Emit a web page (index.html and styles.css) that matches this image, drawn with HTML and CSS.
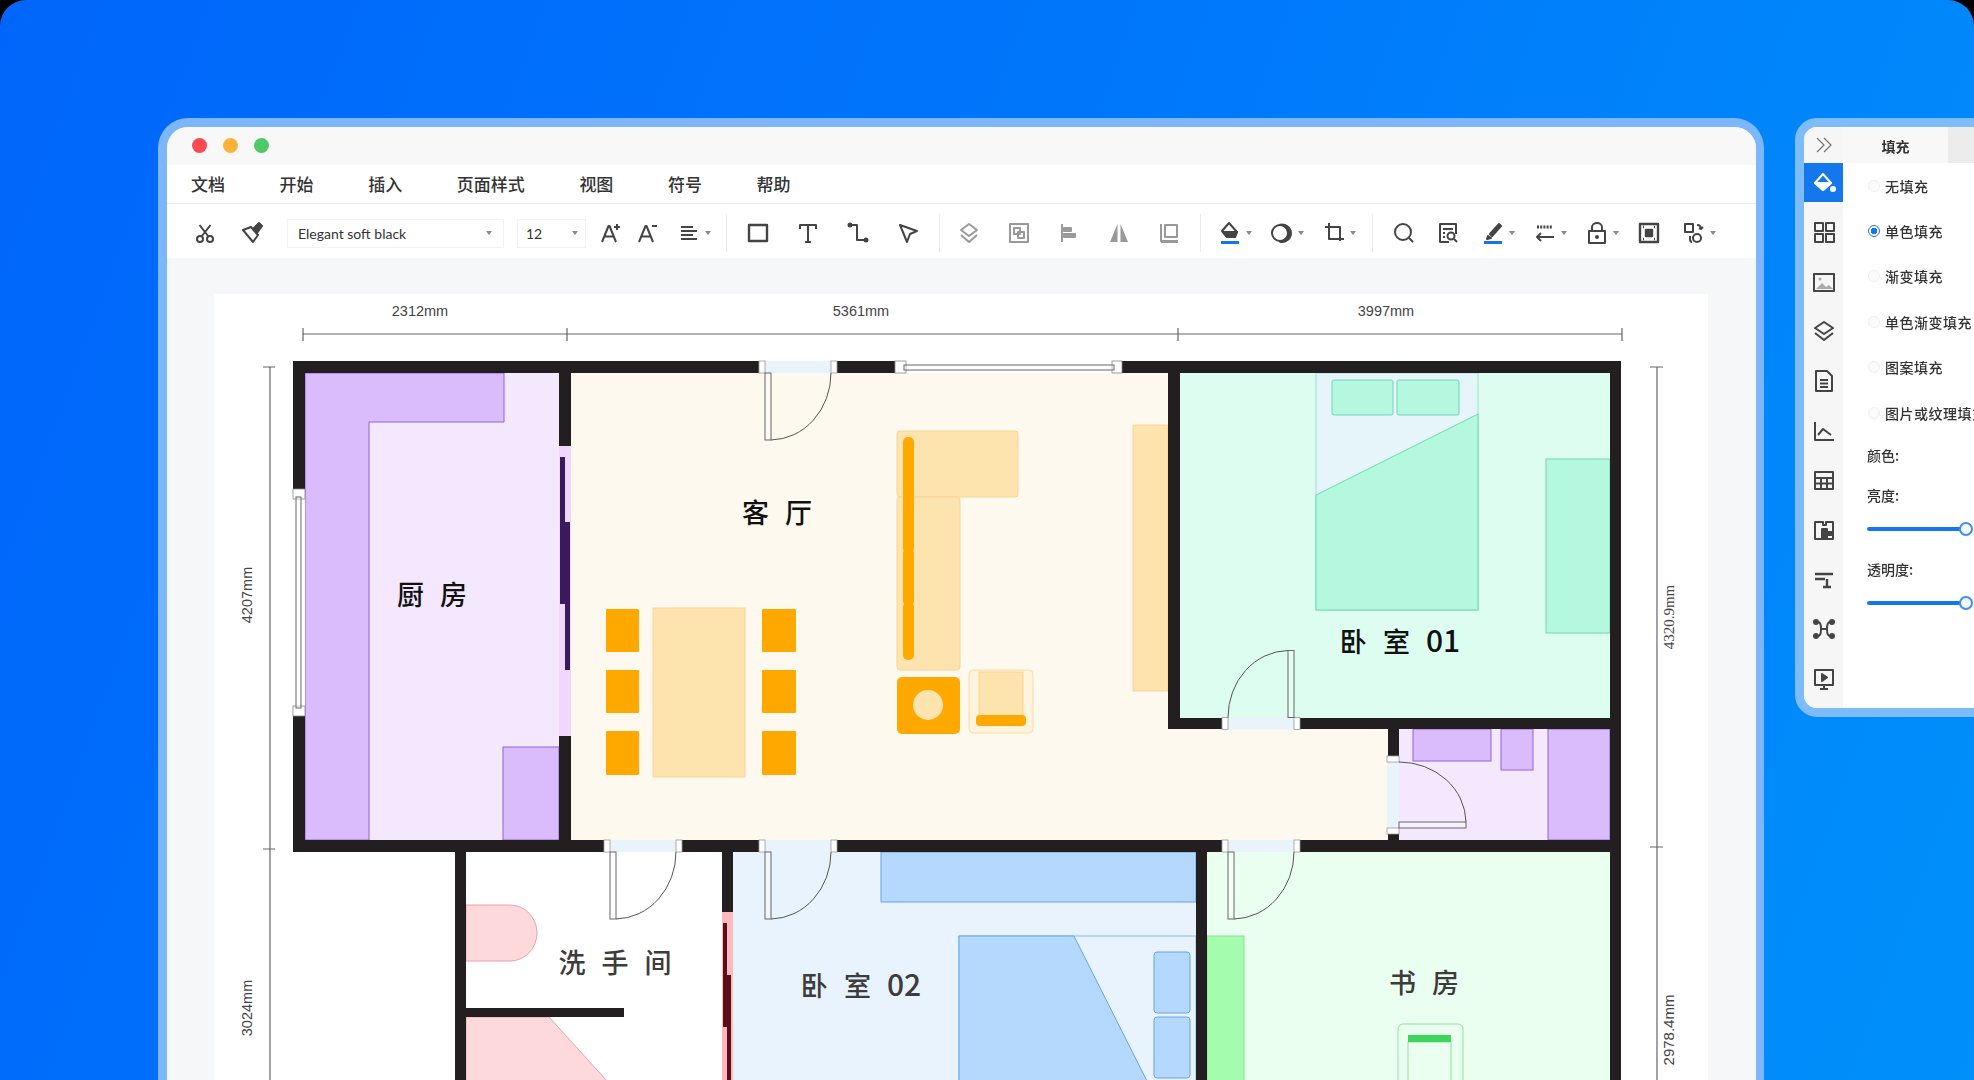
FILE: index.html
```html
<!DOCTYPE html>
<html lang="zh">
<head>
<meta charset="utf-8">
<title>户型图</title>
<link rel="stylesheet" href="styles.css">
</head>
<body>
<div class="stage">
  <div class="window">
    <div class="titlebar"><span class="dot red"></span><span class="dot amber"></span><span class="dot green"></span></div>
    <nav class="menubar"><span>文档</span><span>开始</span><span>插入</span><span>页面样式</span><span>视图</span><span>符号</span><span>帮助</span></nav>
    <div class="toolbar">
      <span class="tool w47"><svg class="ic" viewBox="0 0 24 24"><circle cx="7" cy="18" r="3"/><circle cx="17" cy="18" r="3"/><path d="M8.500 15.500 17.500 4M15.500 15.500 6.500 4"/></svg></span>
      <span class="tool w47"><svg class="ic" viewBox="0 0 24 24"><path d="M3 9 11 6 18 14 13 21Z"/><path d="M13 8 19 2 22 5 17 12Z" class="solid"/></svg></span>
      <span class="select font-select"><span>Elegant soft black</span><i class="caret"></i></span>
      <span class="select size-select"><span>12</span><i class="caret"></i></span>
      <span class="tool w37 first-a"><svg class="ic" viewBox="0 0 24 24"><path d="m4 21 6.500-16h1L18 21M6.500 15.500h9M19 3v6M16 6h6"/></svg></span>
      <span class="tool w37"><svg class="ic" viewBox="0 0 24 24"><path d="m4 21 6.500-16h1L18 21M6.500 15.500h9M17 5h5"/></svg></span>
      <span class="tool-c"><svg class="ic" viewBox="0 0 24 24"><path d="M4 6h12M4 10h16M4 14h12M4 18h16"/></svg><i class="caret"></i></span>
      <span class="sep sep1"></span>
      <span class="tool w50"><svg class="ic thick" viewBox="0 0 24 24"><rect x="3" y="4" width="18" height="16"/></svg></span>
      <span class="tool w50"><svg class="ic" viewBox="0 0 24 24"><path d="M4 8V4h16v4M12 4v17M9 21h6"/></svg></span>
      <span class="tool w50"><svg class="ic" viewBox="0 0 24 24"><circle cx="4" cy="4" r="1.500" class="solid"/><circle cx="20" cy="19" r="1.500" class="solid"/><path d="M5 4h6v15h8"/></svg></span>
      <span class="tool w50"><svg class="ic" viewBox="0 0 24 24"><path d="m4 4 17 6-7 3-3 8L4 4Z"/></svg></span>
      <span class="sep sep2"></span>
      <span class="tool w50 muted"><svg class="ic" viewBox="0 0 24 24"><path d="m12 3 8 6-8 6-8-6 8-6Z"/><path d="m4 14 8 7 8-7"/></svg></span>
      <span class="tool w50 muted"><svg class="ic" viewBox="0 0 24 24"><rect x="3" y="3" width="18" height="18"/><rect x="7" y="7" width="6" height="6"/><rect x="11" y="11" width="6" height="6"/></svg></span>
      <span class="tool w50 muted"><svg class="ic" viewBox="0 0 24 24"><path d="M5 3v18"/><path d="M7 7h7v3H7ZM7 13h11v3H7Z" class="solid"/></svg></span>
      <span class="tool w50 muted"><svg class="ic" viewBox="0 0 24 24"><path d="M10.500 3v18H3ZM13.500 3v18H21Z" class="flat"/></svg></span>
      <span class="tool w50 muted"><svg class="ic" viewBox="0 0 24 24"><path d="M4 3v17h17M4 21h17"/><rect x="8" y="4" width="12" height="12"/></svg></span>
      <span class="sep sep3"></span>
      <span class="tool-c"><svg class="ic" viewBox="0 0 24 24"><path d="M11 2 4 10l5 6h8l2-5-8-9Z"/><path d="M5 11h14l-2 5H9Z" class="solid"/><rect x="3" y="20" width="18" height="3" class="blue"/></svg><i class="caret"></i></span>
      <span class="tool-c"><svg class="ic" viewBox="0 0 24 24"><path d="M21 12a9 9 0 0 1-11 8.800 8 8 0 1 0 0-17 9 9 0 0 1 11 8.200Z" class="solid"/><circle cx="10" cy="12" r="8"/></svg><i class="caret"></i></span>
      <span class="tool-c"><svg class="ic" viewBox="0 0 24 24"><path d="M3 6h15v14M7 2v16h15"/></svg><i class="caret"></i></span>
      <span class="sep sep4"></span>
      <span class="tool w44"><svg class="ic" viewBox="0 0 24 24"><circle cx="11" cy="11" r="8"/><path d="m17 17 4 4"/></svg></span>
      <span class="tool w44"><svg class="ic" viewBox="0 0 24 24"><path d="M13 21H4V3h16v10M7 8h10M7 12h2M7 16h2"/><circle cx="15" cy="15" r="3.500"/><path d="m18 18 3 3"/></svg></span>
      <span class="tool-c"><svg class="ic" viewBox="0 0 24 24"><path d="m9 13 9-10 2 2-9 10Z" class="solid"/><path d="M7 15l3 2-4 1Z" class="solid"/><rect x="3" y="20" width="18" height="3" class="blue"/></svg><i class="caret"></i></span>
      <span class="tool-c"><svg class="ic" viewBox="0 0 24 24"><path d="M4 6h16" class="dash"/><path d="M21 16H4m4-4-4 4 4 4"/></svg><i class="caret"></i></span>
      <span class="tool-c"><svg class="ic" viewBox="0 0 24 24"><rect x="4" y="10" width="16" height="12"/><path d="M7 10V6a5 4 0 0 1 10 0v4"/><circle cx="12" cy="16" r="1" class="solid"/></svg><i class="caret"></i></span>
      <span class="tool-c w45"><svg class="ic thick" viewBox="0 0 24 24"><rect x="3" y="3" width="18" height="18"/><rect x="9" y="9" width="6" height="6" class="solid"/><path d="M6 6h1M17 6h1M6 18h1M17 18h1"/></svg></span>
      <span class="tool-c"><svg class="ic" viewBox="0 0 24 24"><rect x="3" y="3" width="8" height="8"/><circle cx="15" cy="17" r="4"/><path d="M15 4c3 0 4 1 4 4m-2-1 2 1 2-2M8 15v3c0 2 1 3 2 3"/></svg><i class="caret"></i></span>
    </div>
    <main class="canvas">
      <section class="sheet">
        <svg class="plan" viewBox="214 294 1494 786" role="img" aria-label="户型图">
          <defs>
            <g id="door">
              <rect class="gap" x="0" y="0" width="78" height="12"/>
              <rect class="jamb" x="0" y="0" width="6" height="12"/>
              <rect class="jamb" x="72" y="0" width="6" height="12"/>
              <rect class="leaf" x="6" y="12" width="6" height="67"/>
              <path class="swing" d="M12 79A61 67 0 0 0 72 12"/>
            </g>
          </defs>

          <rect class="kitchen" x="305" y="373" width="254" height="467"/>
          <path class="living" d="M571 373H1168V729H1388V840H571Z"/>
          <rect class="mint" x="1180" y="373" width="430" height="345"/>
          <rect class="kitchen" x="1399" y="729" width="211" height="111"/>
          <rect class="bedroom2" x="733" y="852" width="463" height="228"/>
          <rect class="study" x="1207" y="852" width="403" height="228"/>

          <path class="counter" d="M305 373H504V422H369V840H305Z"/>
          <rect class="counter" x="503" y="747" width="56" height="93"/>
          <rect class="counter" x="1413" y="729" width="78" height="32"/>
          <rect class="counter" x="1501" y="729" width="32" height="41"/>
          <rect class="counter" x="1548" y="729" width="62" height="111"/>

          <rect class="soft" x="653" y="608" width="92" height="169"/>
          <rect class="orange" x="606" y="609" width="33" height="43" rx="1"/>
          <rect class="orange" x="606" y="670" width="33" height="43" rx="1"/>
          <rect class="orange" x="606" y="731" width="33" height="44" rx="1"/>
          <rect class="orange" x="762" y="609" width="34" height="43" rx="1"/>
          <rect class="orange" x="762" y="670" width="34" height="43" rx="1"/>
          <rect class="orange" x="762" y="731" width="34" height="44" rx="1"/>
          <rect class="soft" x="897" y="431" width="121" height="66" rx="3"/>
          <rect class="soft" x="897" y="497" width="63" height="173" rx="3"/>
          <rect class="orange" x="903" y="437" width="11" height="62" rx="5"/>
          <rect class="orange" x="903" y="492" width="11" height="61" rx="5"/>
          <rect class="orange" x="903" y="548" width="11" height="58" rx="5"/>
          <rect class="orange" x="903" y="602" width="11" height="58" rx="5"/>
          <rect class="orange" x="897" y="677" width="63" height="57" rx="5"/>
          <circle class="soft plain" cx="928" cy="705" r="15"/>
          <rect class="pale" x="969" y="670" width="64" height="63" rx="4"/>
          <rect class="soft" x="979" y="672" width="44" height="50"/>
          <rect class="orange" x="976" y="715" width="50" height="11" rx="4"/>
          <rect class="soft" x="1133" y="425" width="35" height="266"/>

          <rect class="sheetblue" x="1316" y="373" width="162" height="237"/>
          <path class="minty" d="M1316 495 1478 414V610H1316Z"/>
          <rect class="minty" x="1332" y="380" width="61" height="35" rx="2"/>
          <rect class="minty" x="1397" y="380" width="62" height="35" rx="2"/>
          <rect class="minty" x="1546" y="459" width="64" height="174"/>

          <path class="pink" d="M466 905H510A27 28 0 0 1 510 961H466Z"/>
          <path class="pink" d="M466 1017H549L607 1081H466Z"/>

          <rect class="sky" x="881" y="852" width="315" height="50"/>
          <rect class="bedframe" x="959" y="936" width="237" height="150"/>
          <path class="sky" d="M959 936H1074L1147 1081H959Z"/>
          <rect class="sky" x="1154" y="952" width="36" height="61" rx="3"/>
          <rect class="sky" x="1154" y="1017" width="36" height="61" rx="3"/>

          <rect class="shelf" x="1207" y="936" width="37" height="150"/>
          <rect class="desk" x="1398" y="1024" width="65" height="70" rx="5"/>
          <rect class="desk" x="1408" y="1042" width="43" height="50"/>
          <rect class="deskbar" x="1408" y="1035" width="43" height="7"/>

          <rect class="wall" x="293" y="361" width="1328" height="12"/>
          <rect class="wall" x="293" y="361" width="12" height="491"/>
          <rect class="wall" x="293" y="840" width="1328" height="12"/>
          <rect class="wall" x="1610" y="361" width="11" height="719"/>
          <rect class="wall" x="559" y="373" width="12" height="467"/>
          <rect class="wall" x="1168" y="373" width="12" height="356"/>
          <rect class="wall" x="1168" y="718" width="442" height="11"/>
          <rect class="wall" x="1388" y="729" width="11" height="111"/>
          <rect class="wall" x="455" y="852" width="11" height="228"/>
          <rect class="wall" x="722" y="852" width="11" height="228"/>
          <rect class="wall" x="1196" y="852" width="11" height="228"/>
          <rect class="wall" x="466" y="1008" width="158" height="9"/>

          <use href="#door" x="759" y="361"/>
          <use href="#door" x="604" y="840"/>
          <use href="#door" x="759" y="840"/>
          <use href="#door" x="1222" y="840"/>
          <use href="#door" transform="translate(1300 729.500) rotate(180)"/>
          <use href="#door" transform="translate(1387 834) rotate(-90)"/>

          <rect class="glass" x="895" y="361" width="227" height="12"/>
          <rect class="wjamb" x="895" y="361" width="11" height="12"/>
          <rect class="wjamb" x="1112" y="361" width="10" height="12"/>
          <rect class="leaf" x="904" y="365" width="210" height="5"/>
          <rect class="glass" x="293" y="489" width="12" height="227"/>
          <rect class="wjamb" x="293" y="489" width="12" height="10"/>
          <rect class="wjamb" x="293" y="706" width="12" height="10"/>
          <rect class="leaf" x="296" y="497" width="5" height="211"/>

          <rect class="lilacpane" x="559" y="446" width="12" height="290"/>
          <rect class="darklilac" x="560" y="457" width="5" height="147"/>
          <rect class="darklilac" x="565" y="522" width="5" height="148"/>
          <rect class="rosepane" x="722" y="912" width="11" height="168"/>
          <rect class="darkrose" x="723" y="923" width="4" height="104"/>
          <rect class="darkrose" x="727" y="975" width="4" height="105"/>

          <path class="dim" d="M303 334H1622M303 328V341M567 328V341M1178 328V341M1622 328V341"/>
          <path class="dim" d="M270 367V1080M263 367H275M263 849H275"/>
          <path class="dim" d="M1657 367V1080M1650 367H1663M1650 847H1663"/>

          <text class="dimtext mid" x="420" y="316">2312mm</text>
          <text class="dimtext mid" x="861" y="316">5361mm</text>
          <text class="dimtext mid" x="1386" y="316">3997mm</text>
          <text class="dimtext mid" transform="translate(252 595) rotate(-90)">4207mm</text>
          <text class="dimtext mid" transform="translate(252 1008) rotate(-90)">3024mm</text>
          <text class="dimtext serif mid" transform="translate(1674 617) rotate(-90)">4320.9mm</text>
          <text class="dimtext wide mid" transform="translate(1674 1030) rotate(-90)">2978.4mm</text>

          <text class="room mid" x="432" y="605">厨 房</text>
          <text class="room mid" x="777" y="523">客 厅</text>
          <text class="room mid" x="1400" y="652">卧 室 <tspan class="num">01</tspan></text>
          <text class="room grey mid" x="615" y="973">洗 手 间</text>
          <text class="room grey mid" x="861" y="996">卧 室 <tspan class="num">02</tspan></text>
          <text class="room grey mid" x="1424" y="993">书 房</text>
        </svg>
      </section>
    </main>
  </div>

  <aside class="panel">
    <div class="rail">
      <div class="rail-top"><svg class="ic thin" viewBox="0 0 24 24"><path d="m5 5 7 7-7 7M12 5l7 7-7 7"/></svg></div>
      <div class="rail-active"><svg class="ic white" viewBox="0 0 24 24"><path d="M11 3 3 12l8 7 8-7-8-9Z"/><path d="M3 12h16l-8 7Z" class="solid"/><circle cx="21" cy="18" r="2" class="solid"/></svg></div>
      <div class="rail-item"><svg class="ic" viewBox="0 0 24 24"><rect x="3" y="3" width="8" height="8"/><rect x="14" y="3" width="8" height="8"/><rect x="3" y="14" width="8" height="8"/><rect x="14" y="14" width="8" height="8"/></svg></div>
      <div class="rail-item"><svg class="ic" viewBox="0 0 24 24"><rect x="2" y="4" width="20" height="17"/><path d="m4 19 6-6 4 4 3-2 4 4Z" class="grey-fill"/><circle cx="8" cy="9" r="1.500" class="grey-fill"/></svg></div>
      <div class="rail-item"><svg class="ic" viewBox="0 0 24 24"><path d="m12 3 9 6-9 6-9-6 9-6Z"/><path d="m3 14 9 7 9-7"/></svg></div>
      <div class="rail-item"><svg class="ic" viewBox="0 0 24 24"><path d="M4 2h11l5 5v15H4ZM8 11h8M8 14.500h8M8 18h8"/></svg></div>
      <div class="rail-item"><svg class="ic" viewBox="0 0 24 24"><path d="M3 3v18h19M6 16l5-6 4 3 4 3"/></svg></div>
      <div class="rail-item"><svg class="ic" viewBox="0 0 24 24"><rect x="3" y="4" width="18" height="17"/><path d="M3 10h18M3 15.500h18M9 10v11M15 10v11"/></svg></div>
      <div class="rail-item"><svg class="ic" viewBox="0 0 24 24"><path d="M3 4h8v3h3V4h7v17H3Z"/><path d="M10 11h5v3h5v3h-5v4h-5Z" class="solid"/></svg></div>
      <div class="rail-item"><svg class="ic thick" viewBox="0 0 24 24"><path d="M3 6h18M3 11h10M15 11v8M11 19h8"/></svg></div>
      <div class="rail-item"><svg class="ic" viewBox="0 0 24 24"><circle cx="4" cy="5" r="2" class="solid"/><circle cx="20" cy="5" r="2" class="solid"/><circle cx="4" cy="19" r="2" class="solid"/><circle cx="20" cy="19" r="2" class="solid"/><path d="M6 5c4 0 4 14 0 14M18 5c-4 0-4 14 0 14M9 12h6"/></svg></div>
      <div class="rail-item"><svg class="ic" viewBox="0 0 24 24"><rect x="3" y="3" width="18" height="15"/><path d="M10 7v7l5-3.500Z" class="solid"/><path d="M12 18v4M8 22h8"/></svg></div>
    </div>
    <div class="props">
      <div class="tabs"><span class="tab">填充</span></div>
      <label class="option"><i class="radio"></i>无填充</label>
      <label class="option"><i class="radio on"></i>单色填充</label>
      <label class="option"><i class="radio"></i>渐变填充</label>
      <label class="option"><i class="radio"></i>单色渐变填充</label>
      <label class="option"><i class="radio"></i>图案填充</label>
      <label class="option"><i class="radio"></i>图片或纹理填充</label>
      <div class="field">颜色:</div>
      <div class="field">亮度:</div>
      <div class="slider"><i class="thumb"></i></div>
      <div class="field">透明度:</div>
      <div class="slider"><i class="thumb"></i></div>
    </div>
  </aside>
</div>
</body>
</html>
```

FILE: styles.css
```css
* { box-sizing: border-box; }
html, body { margin: 0; background: #000; }
body { width: 1974px; height: 1080px; overflow: hidden; }

.stage {
  position: relative;
  width: 1974px;
  height: 1080px;
  overflow: hidden;
  border-radius: 26px 26px 0 0;
  background: linear-gradient(110deg, #0066fb 0%, #0078fb 50%, #0090fa 100%);
  font-family: "Noto Sans CJK SC", "Noto Sans", sans-serif;
  color: #333;
  filter: blur(0.4px);
}

.window {
  position: absolute;
  left: 158px;
  top: 118px;
  width: 1606px;
  height: 1000px;
  display: flex;
  flex-direction: column;
  border: solid #7db6fb;
  border-width: 9px 8px 0 9px;
  border-radius: 30px 30px 0 0;
  overflow: hidden;
  background: #f6f7f9;
}

.titlebar {
  height: 38px;
  display: flex;
  align-items: center;
  gap: 16px;
  padding: 0 0 2px 25px;
  background: #f8f8f8;
}
.dot { width: 15px; height: 15px; border-radius: 50%; }
.red { background: #fb4a52; }
.amber { background: #fdb23c; }
.green { background: #4fc968; }

.menubar {
  height: 39px;
  display: flex;
  align-items: center;
  gap: 54.600px;
  padding: 0 0 1px 24px;
  background: #fff;
  border-bottom: 1px solid #ebebeb;
  font-size: 17px;
  font-weight: 500;
  line-height: 1;
}

.toolbar {
  height: 54px;
  display: flex;
  align-items: center;
  padding: 4px 0 0 14px;
  background: #fff;
  color: #444;
}
.tool { display: flex; justify-content: center; align-items: center; flex: none; }
.w47 { width: 47px; }
.w50 { width: 50px; }
.w44 { width: 44px; }
.w37 { width: 37.500px; }
.first-a { margin-left: 6px; }
.muted { color: #999; }
.tool-c { display: flex; align-items: center; gap: 4px; flex: none; width: 52px; padding-left: 11px; }
.tool-c.w45 { width: 45px; }
.caret {
  width: 0;
  height: 0;
  flex: none;
  border: 3px solid transparent;
  border-top: 4px solid #888;
  border-bottom: 0;
}
.select {
  height: 27px;
  flex: none;
  display: flex;
  align-items: center;
  justify-content: space-between;
  background: #fff;
  box-shadow: 0 0 0 1px #f2f2f2;
  font-family: Lato, "Liberation Sans", Arial, sans-serif;
  font-size: 14px;
  color: #333;
}
.font-select { width: 215px; margin-left: 13px; padding: 0 11px 0 10px; }
.size-select { width: 67px; margin-left: 15px; padding: 0 7px 0 8px; }
.sep { width: 1px; height: 38px; flex: none; background: #ececec; }
.sep1 { margin: 0 6px 0 8px; }
.sep2 { margin: 0 4px 0 6px; }
.sep3 { margin: 0 6px; }
.sep4 { margin: 0 9px; }

.ic {
  width: 24px;
  height: 24px;
  flex: none;
  fill: none;
  stroke: currentColor;
  stroke-width: 2;
  stroke-linejoin: round;
}
.ic.thick { stroke-width: 2.400; }
.ic.thin { stroke-width: 1.200; }
.ic.white { color: #fff; }
.ic .solid { fill: currentColor; }
.ic .flat { fill: currentColor; stroke: none; }
.ic .grey-fill { fill: #aaa; stroke: none; }
.ic .blue { fill: #1675e8; stroke: none; }
.ic .dash { stroke-dasharray: 2 1.200; stroke-width: 3; }

.canvas { flex: 1; min-height: 0; padding: 36px 48px 0 47px; }
.sheet { height: 100%; background: #fff; }
.plan { display: block; width: 1494px; height: 786px; }

.kitchen { fill: #f3e8fe; }
.living { fill: #fef9ee; }
.mint { fill: #dcfdf0; }
.bedroom2 { fill: #e8f3fe; }
.study { fill: #eafff0; }
.counter { fill: #dabcfd; stroke: #8f63d8; stroke-width: 1; }
.soft { fill: #fde3ae; stroke: #f7d596; stroke-width: 1; }
.soft.plain { stroke: none; }
.pale { fill: #fef3dc; stroke: #f9dca4; stroke-width: 1; }
.orange { fill: #ffa800; }
.sheetblue { fill: #e6f5fa; stroke: #9adfd0; stroke-width: 1; }
.minty { fill: #b4f8e0; stroke: #71d6b8; stroke-width: 1; }
.pink { fill: #fdd9db; stroke: #e8a2a8; stroke-width: 1; }
.sky { fill: #b5d8fd; stroke: #66a5ea; stroke-width: 1; }
.bedframe { fill: #e8f3fe; stroke: #8ab9ea; stroke-width: 1; }
.shelf { fill: #a4fdac; stroke: #8be295; stroke-width: 1; }
.desk { fill: none; stroke: #92e09e; stroke-width: 1; }
.deskbar { fill: #3dd65a; }
.wall { fill: #231f20; }
.gap { fill: #e9f3fc; }
.jamb { fill: #fff; stroke: #999; stroke-width: .8; }
.wjamb { fill: #fff; stroke: #888; stroke-width: .8; }
.leaf { fill: #fff; fill-opacity: .35; stroke: #666; stroke-width: 1; }
.swing { fill: none; stroke: #555; stroke-width: 1; }
.glass { fill: #fff; }
.lilacpane { fill: #f1d6fd; }
.darklilac { fill: #3a1a5c; }
.rosepane { fill: #fdb9bd; }
.darkrose { fill: #5a0f18; }
.dim { fill: none; stroke: #666; stroke-width: 1.200; }

.dimtext {
  font-family: "Liberation Sans", Arial, sans-serif;
  font-size: 14.500px;
  fill: #444;
}
.dimtext.serif { font-family: "Liberation Serif", "Times New Roman", serif; font-size: 15px; }
.dimtext.wide { font-size: 15px; }
.mid { text-anchor: middle; }
.room {
  font-family: "Noto Sans CJK SC", sans-serif;
  font-size: 27px;
  font-weight: 500;
  word-spacing: 10px;
  fill: #111;
}
.room.grey { fill: #3c3c3c; }
.room .num { font-size: 30px; }

.panel {
  position: absolute;
  left: 1795px;
  top: 118px;
  width: 260px;
  height: 599px;
  display: flex;
  border: 9px solid #7dbcf9;
  border-radius: 22px;
  overflow: hidden;
  background: #fff;
}
.rail { width: 39px; flex: none; background: #f6f6f6; color: #444; }
.rail-top { height: 36px; display: flex; align-items: center; justify-content: center; color: #777; }
.rail-active { height: 39px; margin-bottom: 5px; display: flex; align-items: center; justify-content: center; background: #1478ec; }
.rail-item { height: 49.700px; display: flex; align-items: center; justify-content: center; }

.props { flex: 1; font-size: 14px; font-weight: 500; color: #333; }
.tabs { height: 36px; background: #ececec; }
.tab {
  display: flex;
  align-items: center;
  justify-content: center;
  width: 105px;
  height: 36px;
  padding-top: 2px;
  background: #f8f8f8;
  font-weight: 700;
}
.option {
  height: 45.400px;
  display: flex;
  align-items: center;
  gap: 5px;
  padding-left: 25px;
  letter-spacing: .5px;
}
.radio { width: 12px; height: 12px; border-radius: 50%; border: 1px solid #eee; background: #fbfbfb; flex: none; }
.radio.on { border: 1px solid #1478ec; background: radial-gradient(circle, #1478ec 0 3px, #fff 3.500px); }
.field { height: 40px; display: flex; align-items: center; padding-left: 24px; }
.slider {
  position: relative;
  height: 4px;
  width: 100px;
  margin: 12px 0 18px 24px;
  border-radius: 2px;
  background: #1478ec;
}
.thumb {
  position: absolute;
  right: -6px;
  top: -5px;
  width: 14px;
  height: 14px;
  border-radius: 50%;
  border: 2px solid #3f8fef;
  background: #f4f8fd;
}
```
